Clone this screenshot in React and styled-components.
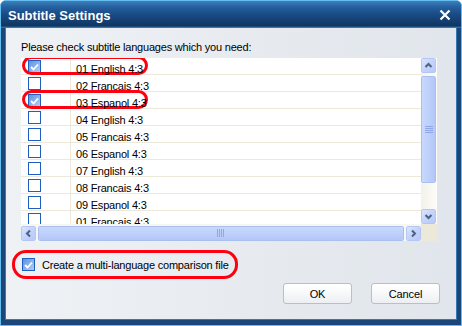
import React from 'react'
import styled, { createGlobalStyle } from 'styled-components'

const Global = createGlobalStyle`
  html, body {
    margin: 0;
    padding: 0;
    background: #ffffff;
  }
  body {
    font-family: "Liberation Sans", Arial, sans-serif;
    font-size: 11px;
    letter-spacing: -0.2px;
  }
`

const Window = styled.div`
  box-sizing: border-box;
  width: 462px;
  height: 326px;
  display: flex;
  flex-direction: column;
  background: #1b4677;
  border: 1px solid #62bdf0;
  border-radius: 6px 6px 0 0;
  padding: 0 5px 6px 5px;
`

const TitleBar = styled.div`
  height: 27px;
  margin: 0 -5px;
  padding: 0 10px 0 7px;
  display: flex;
  align-items: center;
  justify-content: space-between;
  border-radius: 5px 5px 0 0;
  background: linear-gradient(180deg, #3f7fb8 0%, #2560a0 22%, #1a4c85 48%, #133d6d 78%, #10365f 92%, #3a80bb 100%);
`

const Title = styled.span`
  color: #ffffff;
  font-weight: bold;
  font-size: 13px;
  letter-spacing: 0;
  padding-top: 1px;
`

const Client = styled.div`
  flex: 1;
  display: flex;
  flex-direction: column;
  padding: 13px 16px 0 15px;
  background: linear-gradient(90deg, #eff2f5 0%, #e6eaef 60%, #e1e6ec 100%);
  box-shadow: 0 0 0 1px #3677b5;
`

const Prompt = styled.div`
  color: #000;
  line-height: 13px;
  height: 17px;
`

const ListBox = styled.div`
  display: grid;
  grid-template-columns: 400px 16px;
  grid-template-rows: 166px 17px;
  width: 416px;
  background: #ffffff;
`

const Rows = styled.div`
  overflow: hidden;
  background: #ffffff;
`

const Row = styled.div`
  position: relative;
  display: flex;
  height: 17px;
  box-sizing: border-box;
  border-bottom: 1px solid #ede9da;
`

const CheckCell = styled.div`
  width: 50px;
  box-sizing: border-box;
  border-right: 1px solid #ede9da;
  padding: 2px 0 0 7px;
`

const TextCell = styled.div`
  position: relative;
  z-index: 1;
  padding: 5px 0 0 5px;
  color: #000;
  white-space: nowrap;
`

const Highlight = styled.div`
  position: absolute;
  left: 1px;
  top: -2px;
  width: 126px;
  height: 19px;
  box-sizing: border-box;
  border: 3px solid #ff0010;
  border-radius: 10px;
  pointer-events: none;
`

const Box = styled.span`
  display: inline-flex;
  align-items: center;
  justify-content: center;
  box-sizing: border-box;
  width: 13px;
  height: 13px;
  border: 1px solid #1f5fbf;
  background: ${p => (p.checked
    ? 'linear-gradient(135deg, #5d92dc 0%, #8db3ea 55%, #b4cdf2 100%)'
    : '#ffffff')};
`

const VScroll = styled.div`
  display: flex;
  flex-direction: column;
  background: linear-gradient(90deg, #f3f1ea, #fdfcf8);
`

const HScroll = styled.div`
  display: flex;
  align-items: center;
  gap: 2px;
  padding-top: 1px;
  background: #f7f6f1;
`

const Corner = styled.div`
  background: #ece9da;
`

const ArrowButton = styled.div`
  box-sizing: border-box;
  width: 15px;
  height: 15px;
  flex: none;
  display: flex;
  align-items: center;
  justify-content: center;
  border: 1px solid #ffffff;
  outline: 1px solid #b4c6f2;
  outline-offset: -1px;
  border-radius: 2px;
  background: linear-gradient(135deg, #dbe5fe 0%, #c3d3fb 50%, #b6c9f7 100%);
`

const Thumb = styled.div`
  box-sizing: border-box;
  display: flex;
  align-items: center;
  justify-content: center;
  border: 1px solid #ffffff;
  outline: 1px solid #a9bff0;
  outline-offset: -1px;
  border-radius: 2px;
  background: ${p => (p.vertical
    ? 'linear-gradient(90deg, #c9d8fd, #bccffb 60%, #b3c7f6)'
    : 'linear-gradient(180deg, #c9d8fd, #bccffb 60%, #b3c7f6)')};
  width: ${p => (p.vertical ? '15px' : 'auto')};
  height: ${p => (p.vertical ? 'auto' : '15px')};
  flex: ${p => (p.vertical ? 'none' : '1')};
`

const Track = styled.div`
  flex: 1;
`

const Footer = styled.div`
  display: flex;
  flex-direction: column;
  padding-top: 9px;
`

const Marked = styled.label`
  display: flex;
  align-items: center;
  gap: 7px;
  width: 226px;
  height: 29px;
  box-sizing: border-box;
  margin-left: -9px;
  padding-left: 7px;
  border: 3px solid #ff0010;
  border-radius: 14px;
`

const Buttons = styled.div`
  display: flex;
  justify-content: flex-end;
  gap: 19px;
  margin-top: 4px;
`

const Button = styled.button`
  width: 69px;
  height: 21px;
  box-sizing: border-box;
  border: 1px solid #b9bec7;
  border-radius: 3px;
  background: linear-gradient(180deg, #ffffff 0%, #f7f8fa 50%, #eceef2 100%);
  font-family: "Liberation Sans", Arial, sans-serif;
  font-size: 11px;
  letter-spacing: -0.15px;
  color: #000;
  padding: 0;
`

const Check = () => (
  <svg width="9" height="8" viewBox="0 0 9 8">
    <polyline points="1,4 3.5,6.5 8,1.5" fill="none" stroke="#ffffff" strokeWidth="1.8" />
  </svg>
)

const CheckBox = ({ checked }) => <Box checked={checked}>{checked && <Check />}</Box>

const Chevron = ({ dir }) => {
  const pts = {
    up: '1.5,6 4.5,3 7.5,6',
    down: '1.5,3 4.5,6 7.5,3',
    left: '6,1.5 3,4.5 6,7.5',
    right: '3,1.5 6,4.5 3,7.5',
  }[dir]
  return (
    <svg width="9" height="9" viewBox="0 0 9 9">
      <polyline points={pts} fill="none" stroke="#4d6185" strokeWidth="2" />
    </svg>
  )
}

const Grip = ({ vertical }) => (
  <svg width="8" height="8" viewBox="0 0 8 8">
    {[0, 2, 4, 6].map(o => (vertical
      ? <line key={o} x1="0" x2="8" y1={o + 0.5} y2={o + 0.5} stroke="#8ea7e8" strokeWidth="1" />
      : <line key={o} y1="0" y2="8" x1={o + 0.5} x2={o + 0.5} stroke="#8ea7e8" strokeWidth="1" />))}
  </svg>
)

const CloseIcon = () => (
  <svg width="12" height="12" viewBox="0 0 12 12">
    <path d="M1.5 1.5 L10.5 10.5 M10.5 1.5 L1.5 10.5" stroke="#ffffff" strokeWidth="2.2" />
  </svg>
)

const languages = [
  { name: '01 English 4:3', checked: true, marked: true },
  { name: '02 Francais 4:3' },
  { name: '03 Espanol 4:3', checked: true, marked: true },
  { name: '04 English 4:3' },
  { name: '05 Francais 4:3' },
  { name: '06 Espanol 4:3' },
  { name: '07 English 4:3' },
  { name: '08 Francais 4:3' },
  { name: '09 Espanol 4:3' },
  { name: '01 Francais 4:3' },
]

const App = () => {
  const rows = languages.map((item, i) => (
    <Row key={i}>
      <CheckCell><CheckBox checked={item.checked} /></CheckCell>
      <TextCell>{item.name}</TextCell>
      {item.marked && <Highlight />}
    </Row>
  ))

  return (
    <>
      <Global />
      <Window>
        <TitleBar>
          <Title>Subtitle Settings</Title>
          <CloseIcon />
        </TitleBar>
        <Client>
          <Prompt>Please check subtitle languages which you need:</Prompt>
          <ListBox>
            <Rows>{rows}</Rows>
            <VScroll>
              <ArrowButton><Chevron dir="up" /></ArrowButton>
              <Thumb vertical style={{ height: 107, marginTop: 3 }}><Grip vertical /></Thumb>
              <Track />
              <ArrowButton><Chevron dir="down" /></ArrowButton>
            </VScroll>
            <HScroll>
              <ArrowButton><Chevron dir="left" /></ArrowButton>
              <Thumb><Grip /></Thumb>
              <ArrowButton><Chevron dir="right" /></ArrowButton>
            </HScroll>
            <Corner />
          </ListBox>
          <Footer>
            <Marked>
              <CheckBox checked />
              <span>Create a multi-language comparison file</span>
            </Marked>
            <Buttons>
              <Button>OK</Button>
              <Button>Cancel</Button>
            </Buttons>
          </Footer>
        </Client>
      </Window>
    </>
  )
}

export default App
